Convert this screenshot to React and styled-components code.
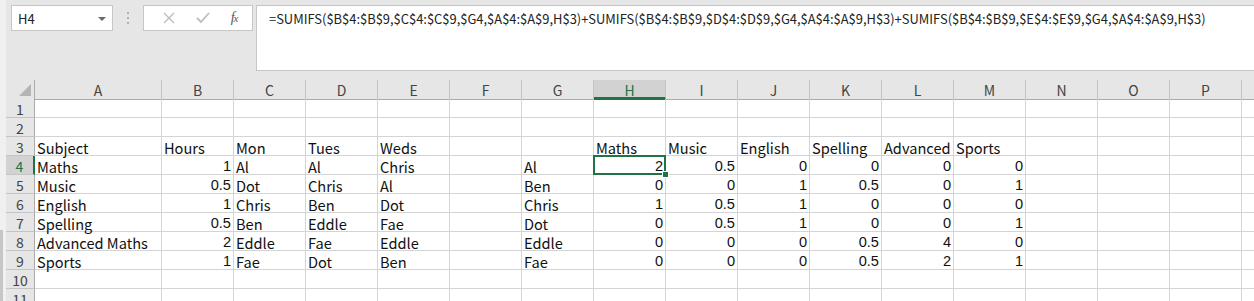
import React from 'react'
import styled, { createGlobalStyle, css } from 'styled-components'

const GlobalStyle = createGlobalStyle`
  html, body {
    margin: 0;
    padding: 0;
    background: #e6e6e6;
    overflow: hidden;
  }
  body {
    font-family: "Noto Sans CJK SC", "Liberation Sans", sans-serif;
    color: #000;
  }
`

const COLS = ['A', 'B', 'C', 'D', 'E', 'F', 'G', 'H', 'I', 'J', 'K', 'L', 'M', 'N', 'O', 'P', 'Q']
const COL_WIDTHS = { A: 127 }
const FORMULA = '=SUMIFS($B$4:$B$9,$C$4:$C$9,$G4,$A$4:$A$9,H$3)+SUMIFS($B$4:$B$9,$D$4:$D$9,$G4,$A$4:$A$9,H$3)+SUMIFS($B$4:$B$9,$E$4:$E$9,$G4,$A$4:$A$9,H$3)'

const sheet = {
  3: { A: 'Subject', B: 'Hours', C: 'Mon', D: 'Tues', E: 'Weds', H: 'Maths', I: 'Music', J: 'English', K: 'Spelling', L: 'Advanced', M: 'Sports' },
  4: { A: 'Maths', B: 1, C: 'Al', D: 'Al', E: 'Chris', G: 'Al', H: 2, I: 0.5, J: 0, K: 0, L: 0, M: 0 },
  5: { A: 'Music', B: 0.5, C: 'Dot', D: 'Chris', E: 'Al', G: 'Ben', H: 0, I: 0, J: 1, K: 0.5, L: 0, M: 1 },
  6: { A: 'English', B: 1, C: 'Chris', D: 'Ben', E: 'Dot', G: 'Chris', H: 1, I: 0.5, J: 1, K: 0, L: 0, M: 0 },
  7: { A: 'Spelling', B: 0.5, C: 'Ben', D: 'Eddle', E: 'Fae', G: 'Dot', H: 0, I: 0.5, J: 1, K: 0, L: 0, M: 1 },
  8: { A: 'Advanced Maths', B: 2, C: 'Eddle', D: 'Fae', E: 'Eddle', G: 'Eddle', H: 0, I: 0, J: 0, K: 0.5, L: 4, M: 0 },
  9: { A: 'Sports', B: 1, C: 'Fae', D: 'Dot', E: 'Ben', G: 'Fae', H: 0, I: 0, J: 0, K: 0.5, L: 2, M: 1 }
}

const ROWS = [1, 2, 3, 4, 5, 6, 7, 8, 9, 10, 11]
const ACTIVE = { col: 'H', row: 4 }
// columns whose letter sits beyond the window edge
const HIDDEN_LABELS = ['Q']

const gridTemplate = `29px ${COLS.map(c => (COL_WIDTHS[c] || 72) + 'px').join(' ')}`

const Page = styled.div`
  display: flex;
  width: 1254px;
  height: 301px;
  overflow: hidden;
`

const EdgeStrip = styled.div`
  flex: 0 0 6px;
  display: flex;
  flex-direction: column;
  justify-content: flex-end;
  background: #f0f0f0;
  &::after {
    content: '';
    display: block;
    width: 3px;
    height: 71px;
    background: #c6c6c6;
  }
`

const Main = styled.div`
  flex: 1;
  min-width: 0;
  display: flex;
  flex-direction: column;
`

const FormulaBar = styled.div`
  height: 80px;
  flex: 0 0 80px;
  display: flex;
  align-items: flex-start;
  padding-top: 5px;
  box-sizing: border-box;
  background: #e6e6e6;
`

const NameBox = styled.div`
  width: 102px;
  height: 26px;
  margin-left: 5px;
  box-sizing: border-box;
  background: #fff;
  border: 1px solid #c6c6c6;
  display: flex;
  align-items: center;
  justify-content: space-between;
  padding: 0 6px 0 6px;
  font-size: 13px;
  color: #222;
`

const DropArrow = styled.span`
  width: 0;
  height: 0;
  border-left: 4px solid transparent;
  border-right: 4px solid transparent;
  border-top: 4px solid #6b6b6b;
  margin-top: 1px;
`

const Grip = styled.div`
  width: 30px;
  height: 26px;
  display: flex;
  align-items: center;
  justify-content: center;
  svg { display: block; }
`

const FxBox = styled.div`
  width: 110px;
  height: 26px;
  box-sizing: border-box;
  background: #fff;
  border: 1px solid #c6c6c6;
  display: flex;
  align-items: center;
  justify-content: space-around;
  padding: 0 4px 0 8px;
`

const FxLabel = styled.span`
  font-family: "Liberation Serif", "DejaVu Serif", serif;
  font-style: italic;
  font-size: 14px;
  color: #555;
  letter-spacing: -1px;
  span { font-size: 11px; }
`

const FormulaInput = styled.div`
  flex: 1;
  height: 66px;
  margin-left: 3px;
  box-sizing: border-box;
  background: #fff;
  border: 1px solid #c6c6c6;
  border-right: none;
  padding: 4px 0 0 12px;
  font-size: 12.93px;
  line-height: 18px;
  color: #222;
  white-space: nowrap;
  overflow: hidden;
`

const Grid = styled.div`
  display: grid;
  grid-template-columns: ${gridTemplate};
  grid-auto-rows: 19px;
  background: #fff;
`

const headerBase = css`
  box-sizing: border-box;
  background: #e6e6e6;
  display: flex;
  align-items: center;
  justify-content: center;
  font-family: "Noto Sans CJK SC", "Liberation Sans", sans-serif;
  font-size: 14px;
  color: #444;
`

const Corner = styled.div`
  ${headerBase};
  height: 20px;
  border-right: 1px solid #ababab;
  border-bottom: 1px solid #ababab;
  justify-content: flex-end;
  align-items: flex-end;
  padding: 0 3px 3px 0;
`

const ColHeader = styled.div`
  ${headerBase};
  height: 20px;
  border-right: 1px solid #c4c4c4;
  border-bottom: ${p => (p.$active ? '3px solid #217346' : '1px solid #ababab')};
  background: ${p => (p.$active ? '#d2d2d2' : '#e6e6e6')};
  color: ${p => (p.$active ? '#217346' : '#444')};
  padding-top: ${p => (p.$active ? '3px' : '1px')};
`

const RowHeader = styled.div`
  ${headerBase};
  border-right: ${p => (p.$active ? '2px solid #217346' : '1px solid #ababab')};
  border-bottom: 1px solid #c4c4c4;
  color: ${p => (p.$active ? '#217346' : '#444')};
  background: ${p => (p.$active ? '#d2d2d2' : '#e6e6e6')};
  padding-top: 2px;
`

const Cell = styled.div`
  position: relative;
  box-sizing: border-box;
  border-right: 1px solid #d4d4d4;
  border-bottom: 1px solid #d4d4d4;
  padding: 2px 2px 0 2px;
  font-family: ${p => (p.$num ? '"Liberation Sans", Arial, sans-serif' : '"Noto Sans CJK SC", "Liberation Sans", sans-serif')};
  font-size: 14.6px;
  line-height: 17px;
  white-space: nowrap;
  text-align: ${p => (p.$num ? 'right' : 'left')};
  color: #111;
  ${p => p.$active && css`
    z-index: 2;
    &::before {
      content: '';
      position: absolute;
      left: -1px;
      top: -1px;
      right: -1px;
      bottom: -1px;
      border: 2px solid #217346;
      pointer-events: none;
    }
    &::after {
      content: '';
      position: absolute;
      right: -4px;
      bottom: -4px;
      width: 5px;
      height: 5px;
      background: #217346;
      border: 1px solid #fff;
    }
  `}
`

const CrossIcon = () => (
  <svg width="12" height="12" viewBox="0 0 12 12">
    <path d="M1 1 L11 11 M11 1 L1 11" stroke="#bdbdbd" strokeWidth="1.4" fill="none" />
  </svg>
)

const CheckIcon = () => (
  <svg width="14" height="12" viewBox="0 0 14 12">
    <path d="M1 6 L5 10 L13 1" stroke="#bdbdbd" strokeWidth="1.8" fill="none" />
  </svg>
)

const GripDots = () => (
  <svg width="4" height="12" viewBox="0 0 4 12">
    <rect x="1" y="0" width="2" height="2" fill="#b0b0b0" />
    <rect x="1" y="5" width="2" height="2" fill="#b0b0b0" />
    <rect x="1" y="10" width="2" height="2" fill="#b0b0b0" />
  </svg>
)

const CornerTriangle = () => (
  <svg width="12" height="12" viewBox="0 0 12 12">
    <polygon points="12,0 12,12 0,12" fill="#b4b4b4" />
  </svg>
)

export default function App () {
  return (
    <>
      <GlobalStyle />
      <Page>
        <EdgeStrip />
        <Main>
          <FormulaBar>
            <NameBox>
              <span>H4</span>
              <DropArrow />
            </NameBox>
            <Grip><GripDots /></Grip>
            <FxBox>
              <CrossIcon />
              <CheckIcon />
              <FxLabel>f<span>x</span></FxLabel>
            </FxBox>
            <FormulaInput>{FORMULA}</FormulaInput>
          </FormulaBar>
          <Grid>
            <Corner><CornerTriangle /></Corner>
            {COLS.map(c => (
              <ColHeader key={c} $active={c === ACTIVE.col}>
                {HIDDEN_LABELS.includes(c) ? '' : c}
              </ColHeader>
            ))}
            {ROWS.map(r => (
              <React.Fragment key={r}>
                <RowHeader $active={r === ACTIVE.row}>{r}</RowHeader>
                {COLS.map(c => {
                  const v = sheet[r] && sheet[r][c]
                  const num = typeof v === 'number'
                  return (
                    <Cell key={c} $num={num} $active={r === ACTIVE.row && c === ACTIVE.col}>
                      {v !== undefined ? v : ''}
                    </Cell>
                  )
                })}
              </React.Fragment>
            ))}
          </Grid>
        </Main>
      </Page>
    </>
  )
}
